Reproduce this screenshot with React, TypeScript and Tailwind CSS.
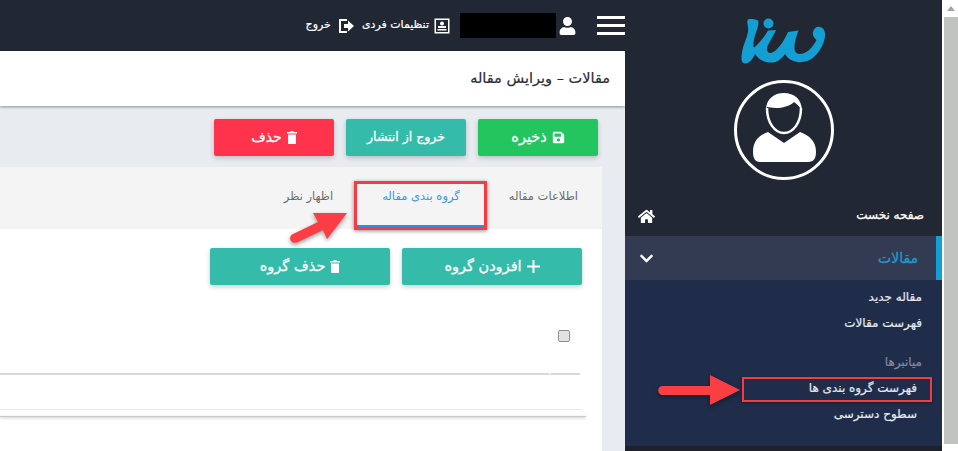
import React from 'react';
import { FaHome, FaChevronDown, FaSave, FaUser } from 'react-icons/fa';

const fa = { fontFamily: '"DejaVu Sans", "Noto Sans", sans-serif' };

const Logo = () => (
  <svg width="85" height="46" viewBox="0 0 85 46" className="block">
    <path d="M7 1.5 C10 0.5 17 1 17.5 4 C17.5 10 13 18 12.5 25 C12 30 13 30 15 28 C19 24 24 18 27 12.5 L35 12 C32 19 26 27 26 31 C26 36 30 36 34 33 C39 29 44 21 47 14 L57.5 12.5 C55 19 53 26 53.5 31 C54 36 58 36.5 62 35.5 C67 34 72 29 75.5 22 C73 20 71 17 72 14 C73 10 76 8 79 9 C83 10 84.5 14 84 18 C83.5 24 80 32 74 38 C69 43 62 45 56 44 C51 43 47 41 44 36 C41 40 37 44 32 44.5 C25 45 19 43 14 36 C12 41 8 45.5 4 45.5 C0 45.5 0 41 1 34 C2 27 6 20 7 14 C8 9 5 4 7 1.5 Z" fill="#149fd4" />
    <circle cx="27.5" cy="5.5" r="5" fill="#149fd4" />
  </svg>
);

const Avatar = () => (
  <svg width="100" height="100" viewBox="0 0 100 100" className="block">
    <circle cx="50" cy="50" r="48.5" fill="none" stroke="#fff" strokeWidth="3" />
    <path d="M33 28 C33 43 41 53 50 53 C59 53 67 43 67 28" fill="none" stroke="#fff" strokeWidth="2.5" />
    <path d="M32 30 C32 19 40 13 50 13 C60 13 68 19 68 31 C66 27 63 24 60 22 C56 26 48 28 42 28 C38 28 35 27 33 27 Z" fill="#fff" />
    <path d="M34 52 L50 63 L66 52 C74 55 82 60 82 72 C82 78 80 82 74 82 L26 82 C21 82 19 78 19 72 C19 60 26 55 34 52 Z" fill="#fff" />
  </svg>
);

const ProfileIcon = () => (
  <svg width="16" height="16" viewBox="0 0 16 16">
    <rect x="0.5" y="0.5" width="15" height="15" fill="#fff" />
    <rect x="2" y="2" width="12" height="12" fill="#222734" />
    <circle cx="8" cy="5.5" r="2" fill="#fff" />
    <rect x="4" y="8" width="8" height="2" fill="#fff" />
    <rect x="3.5" y="11" width="9" height="1.5" fill="#fff" />
  </svg>
);

const LogoutIcon = () => (
  <svg width="16" height="16" viewBox="0 0 16 16">
    <path d="M9 1 H1 V15 H9 V13 H3 V3 H9 Z" fill="#fff" />
    <path d="M6 6 H10 V2.5 L16 8 L10 13.5 V10 H6 Z" fill="#fff" />
  </svg>
);

const TrashIcon = () => (
  <svg width="10" height="13" viewBox="0 0 10 13">
    <path d="M3.5 0 H6.5 V1 H10 V2.5 H0 V1 H3.5 Z" fill="#fff" />
    <path d="M1 3.5 H9 V12 C9 12.6 8.6 13 8 13 H2 C1.4 13 1 12.6 1 12 Z" fill="#fff" />
  </svg>
);

const PlusIcon = () => (
  <svg width="13" height="13" viewBox="0 0 13 13">
    <path d="M5.5 0 H7.5 V5.5 H13 V7.5 H7.5 V13 H5.5 V7.5 H0 V5.5 H5.5 Z" fill="#fff" />
  </svg>
);

const Btn = ({ className, children }: { className: string; children: React.ReactNode }) => (
  <div className={`flex items-center justify-center gap-[5px] rounded-[2px] text-white shadow-[0_2px_5px_rgba(0,0,0,0.2)] [-webkit-text-stroke:0.3px] ${className}`}>
    {children}
  </div>
);

export default function App() {
  return (
    <div className="relative flex h-[451px] w-[958px] overflow-hidden bg-white" style={fa}>
      {/* main column */}
      <div className="flex w-[625px] flex-col bg-[#e8ebf0]">
        <div className="flex h-[51px] shrink-0 items-center justify-end bg-[#222734] text-[11px] text-white shadow-[0_1px_3px_rgba(0,0,0,0.4)] [-webkit-text-stroke:0.2px]">
          <span>خروج</span>
          <div className="ml-[7px]"><LogoutIcon /></div>
          <span className="ml-[8px]">تنظیمات فردی</span>
          <div className="ml-[5px]"><ProfileIcon /></div>
          <div className="ml-[10px] h-[25px] w-[96px] bg-black" />
          <FaUser className="ml-[2px] h-[18px] w-[19px]" />
          <div className="ml-[20px] flex w-[28px] flex-col gap-[5px]">
            <div className="h-[3px] bg-white" />
            <div className="h-[3px] bg-white" />
            <div className="h-[3px] bg-white" />
          </div>
        </div>
        <div className="flex h-[55px] shrink-0 items-center bg-white pr-[15px] text-[14.5px] text-[#2c2c34] shadow-[0_1px_3px_rgba(0,0,0,0.4)] [-webkit-text-stroke:0.2px]" dir="rtl">
          <span>مقالات – ویرایش مقاله</span>
        </div>
        <div className="flex h-[61px] shrink-0 items-start justify-end gap-[12px] pr-[27px] pt-[13px]">
          <Btn className="h-[37px] w-[120px] bg-[#ff334b] text-[14px]"><span>حذف</span><TrashIcon /></Btn>
          <Btn className="h-[37px] w-[120px] bg-[#35bbaa] text-[12.5px]">خروج از انتشار</Btn>
          <Btn className="h-[37px] w-[120px] bg-[#22c55e] text-[14.5px]"><span>ذخیره</span><FaSave className="h-[13px] w-[13px]" /></Btn>
        </div>
        <div className="flex flex-1 flex-col pr-[23px]">
          <div className="flex h-[62px] shrink-0 items-start justify-end gap-[49px] bg-[#f4f4f4] pr-[24px] pt-[21px] text-[11.5px] text-[#6b6b6b]">
            <span>اظهار نظر</span>
            <span className="text-[#3c95ea]">گروه بندی مقاله</span>
            <span>اطلاعات مقاله</span>
          </div>
          <div className="flex flex-1 flex-col bg-white">
            <div className="flex justify-end gap-[12px] pr-[20px] pt-[19px]">
              <Btn className="h-[37px] w-[180px] bg-[#35bbaa] text-[14.5px]"><span>حذف گروه</span><TrashIcon /></Btn>
              <Btn className="h-[37px] w-[180px] bg-[#35bbaa] text-[14.5px]"><span>افزودن گروه</span><PlusIcon /></Btn>
            </div>
            <div className="flex justify-end pr-[32px] pt-[45px]">
              <div className="h-[12px] w-[12px] rounded-[2px] border border-[#8f8f8f] bg-[#e2e2e2]" />
            </div>
            <div className="mr-[22px] mt-[31px] flex h-[2px] gap-px">
              <div className="flex-1 bg-[#d9d9d9]" />
              <div className="w-[30px] bg-[#d9d9d9]" />
            </div>
            <div className="mr-[20px] mt-[34px] h-px bg-[#e8e8e8]" />
            <div className="mr-[16px] mt-[6px] h-px bg-[#c8c8c8] shadow-[0_1px_3px_rgba(0,0,0,0.35)]" />
          </div>
        </div>
      </div>

      {/* sidebar */}
      <div className="flex w-[317px] flex-col bg-[#222734] text-white">
        <div className="flex h-[190px] shrink-0 flex-col items-center pt-[18px]">
          <Logo />
          <div className="mt-[16px]"><Avatar /></div>
        </div>
        <div className="flex h-[46px] shrink-0 items-center justify-between pl-[13px] pr-[18px] text-[12px] [-webkit-text-stroke:0.3px]">
          <FaHome className="mt-[6px] h-[17px] w-[17px]" />
          <span className="mt-[4px]" dir="rtl">صفحه نخست</span>
        </div>
        <div className="flex h-[44px] shrink-0 items-center justify-between border-r-[6px] border-[#149fd4] bg-[#323b52] pl-[14px] pr-[18px]">
          <FaChevronDown className="h-[15px] w-[15px]" />
          <span className="text-[14px] text-[#1c9bd0] [-webkit-text-stroke:0.3px]" dir="rtl">مقالات</span>
        </div>
        <div className="flex h-[166px] shrink-0 flex-col items-end bg-[#1f2d4a] pr-[20px] pt-[8px] text-[12px] text-[#e6e9f0] [-webkit-text-stroke:0.2px]">
          <span className="h-[26px]" dir="rtl">مقاله جدید</span>
          <span className="h-[26px]" dir="rtl">فهرست مقالات</span>
          <span className="mt-[13px] h-[26px] text-[#7f8ba3]" dir="rtl">میانبرها</span>
          <span className="mr-[5px] h-[26px]" dir="rtl">فهرست گروه بندی ها</span>
          <span className="mr-[5px]" dir="rtl">سطوح دسترسی</span>
        </div>
        <div className="flex-1 bg-[#1c212c]" />
      </div>

      {/* scrollbar */}
      <div className="flex w-[16px] flex-col bg-white pl-[2px]">
        <div className="flex h-[17px] shrink-0 items-center justify-center">
          <div className="h-0 w-0 border-x-[4px] border-b-[5px] border-x-transparent border-b-[#a3a3a3]" />
        </div>
        <div className="h-[427px] shrink-0 bg-[#c1c3c1]" />
      </div>

      {/* annotations */}
      <div className="absolute left-[354px] top-[181px] h-[49px] w-[133px] border-[3px] border-[#f63c42] shadow-[0_1px_4px_rgba(0,0,0,0.45)]">
        <div className="absolute bottom-0 left-0 right-0 h-[2px] bg-[#2d8ee8]" />
      </div>
      <div className="absolute left-[742px] top-[377px] h-[25px] w-[190px] border-[2px] border-[#f63c42] shadow-[0_1px_3px_rgba(0,0,0,0.4)]" />
      <svg width="82" height="30" viewBox="0 0 82 30" className="absolute left-[658px] top-[375px] drop-shadow-[0_2px_2px_rgba(0,0,0,0.4)]">
        <path d="M4 11 L52 11 L52 0 L82 15 L52 30 L52 20 L4 20 C-1 20 -1 11 4 11 Z" fill="#fb3d44" />
      </svg>
      <svg width="62" height="36" viewBox="0 0 62 36" className="absolute left-[289px] top-[210px] drop-shadow-[0_2px_2px_rgba(0,0,0,0.4)]">
        <path d="M4 24 L29 12 L24 3 L58 3 L38 29 L34 20 L9 32 C2 35 -2 27 4 24 Z" fill="#fb3d44" />
      </svg>
    </div>
  );
}
